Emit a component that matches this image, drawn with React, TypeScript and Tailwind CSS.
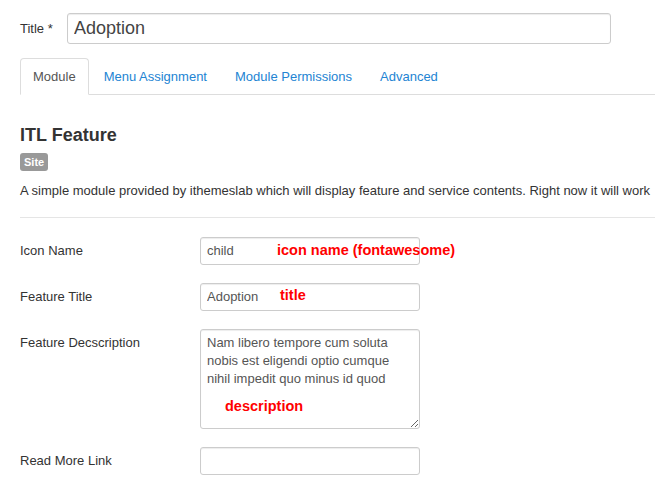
import React from "react";

const tabs = ["Module", "Menu Assignment", "Module Permissions", "Advanced"];

function Note({ text, className }: { text: string; className: string }) {
  return (
    <span
      className={`absolute whitespace-nowrap text-[14.5px] font-bold leading-[18px] text-[#f00] ${className}`}
    >
      {text}
    </span>
  );
}

function Field({ label, children }: { label: string; children: React.ReactNode }) {
  return (
    <div className="mb-[18px] flex">
      <label className="w-[180px] shrink-0 pt-[5px] leading-[18px]">{label}</label>
      <div className="relative">{children}</div>
    </div>
  );
}

function TextInput({ value = "" }: { value?: string }) {
  return (
    <input
      type="text"
      readOnly
      defaultValue={value}
      className="h-[28px] w-[220px] rounded-[3px] border border-[#ccc] bg-white px-[6px] text-[13px] leading-[18px] text-[#555] shadow-[inset_0_1px_1px_rgba(0,0,0,0.075)] outline-none"
    />
  );
}

export default function App() {
  return (
    <div className="h-[490px] w-[655px] overflow-hidden bg-white pl-5 font-['Liberation_Sans',Arial,sans-serif] text-[13px] text-[#333]">
      {/* title */}
      <div className="flex items-center pt-[13px]">
        <label className="w-[47px] shrink-0 leading-[18px]">Title *</label>
        <input
          type="text"
          readOnly
          defaultValue="Adoption"
          className="h-[31px] w-[544px] rounded-[3px] border border-[#ccc] bg-white px-[6px] text-[18px] text-[#444] shadow-[inset_0_1px_1px_rgba(0,0,0,0.075)] outline-none"
        />
      </div>

      {/* tabs */}
      <ul className="mt-[14px] flex w-[700px] border-b border-[#ddd]">
        {tabs.map((t, i) => (
          <li key={t} className="-mb-px mr-[2px]">
            <span
              className={
                i === 0
                  ? "block rounded-t-[4px] border border-[#ddd] border-b-white bg-white px-3 pt-[9px] pb-2 leading-[18px] text-[#555]"
                  : "block rounded-t-[4px] border border-transparent px-3 pt-[9px] pb-2 leading-[18px] text-[#2384d3]"
              }
            >
              {t}
            </span>
          </li>
        ))}
      </ul>

      {/* module info */}
      <h2 className="mt-[30px] text-[18px] font-bold leading-[20px] text-[#333]">ITL Feature</h2>
      <span className="mt-[8px] inline-block h-[18px] rounded-[3px] bg-[#999] px-[4px] text-[11px] font-bold leading-[18px] text-white">
        Site
      </span>
      <p className="mt-[10px] whitespace-nowrap leading-[18px]">
        A simple module provided by ithemeslab which will display feature and service contents. Right now it will work
      </p>
      <div className="mt-[17px] w-[700px] border-t border-[#e5e5e5]" />

      {/* fields */}
      <div className="mt-[19px]">
        <Field label="Icon Name">
          <TextInput value="child" />
          <Note text="icon name (fontawesome)" className="left-[77px] top-[4px]" />
        </Field>
        <Field label="Feature Title">
          <TextInput value="Adoption" />
          <Note text="title" className="left-[80px] top-[3px]" />
        </Field>
        <Field label="Feature Decscription">
          <textarea
            readOnly
            defaultValue={"Nam libero tempore cum soluta\nnobis est eligendi optio cumque\nnihil impedit quo minus id quod"}
            className="block h-[100px] w-[220px] rounded-[3px] border border-[#ccc] bg-white px-[6px] py-[4px] text-[13px] leading-[18px] text-[#555] shadow-[inset_0_1px_1px_rgba(0,0,0,0.075)] outline-none"
          />
          <Note text="description" className="left-[25px] top-[68px]" />
        </Field>
        <Field label="Read More Link">
          <TextInput />
        </Field>
      </div>
    </div>
  );
}
